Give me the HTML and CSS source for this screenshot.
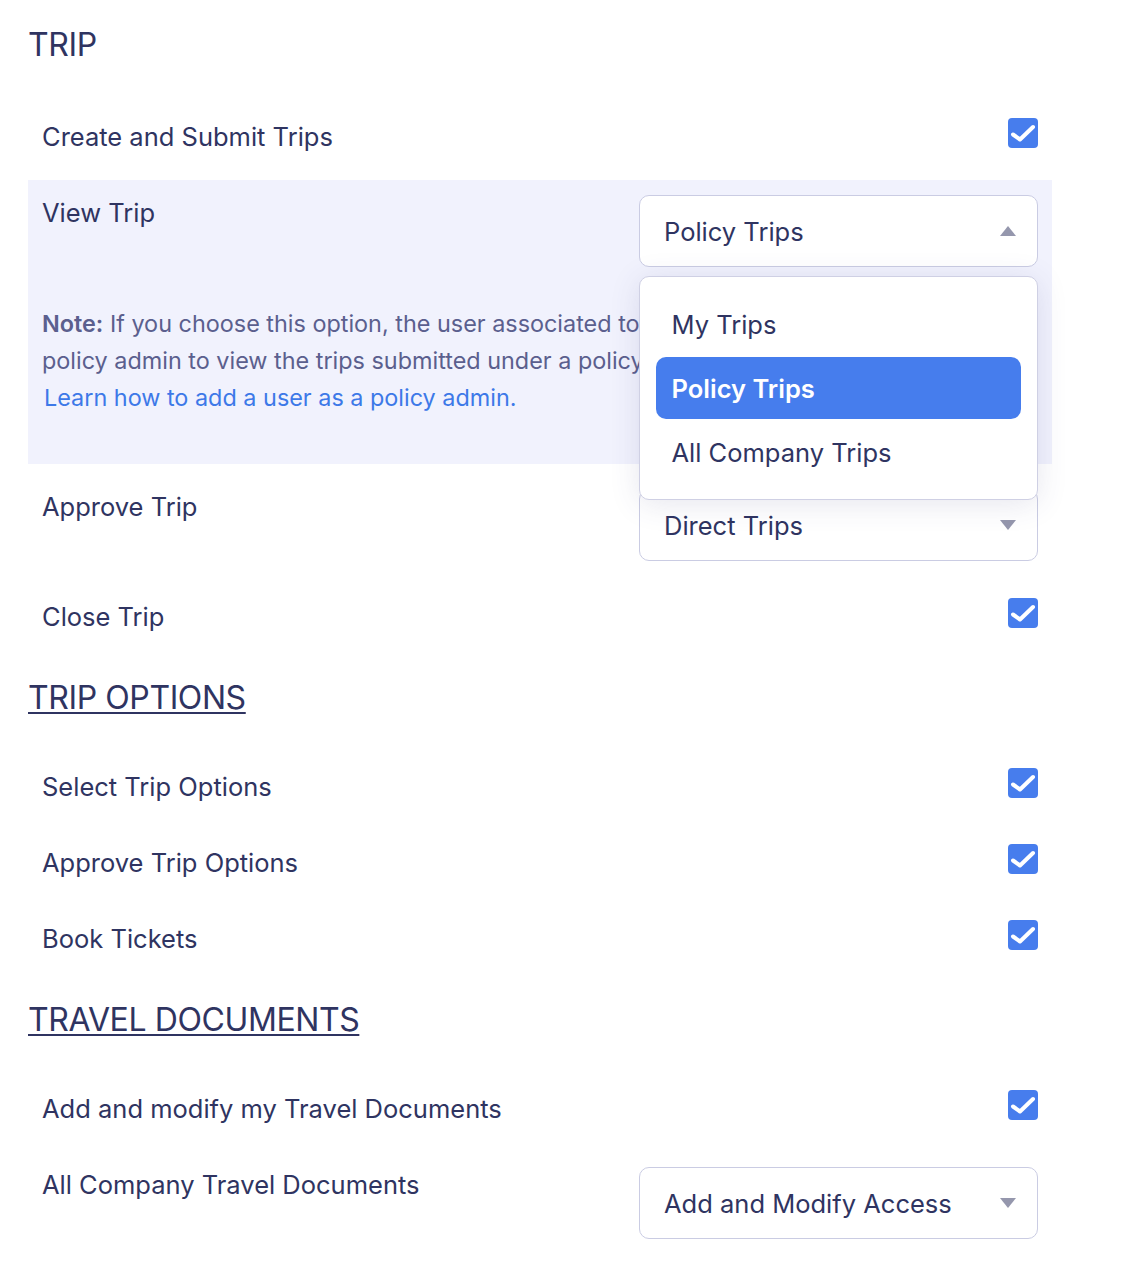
FILE: index.html
```html
<!DOCTYPE html>
<html lang="en">
<head>
  <meta charset="UTF-8" />
  <meta name="viewport" content="width=device-width, initial-scale=1.0" />
  <title>Role Permissions - Trip</title>
  <link rel="stylesheet" href="styles.css">
</head>
<body>

  <main class="perms">

    <h2 class="section-title first">TRIP</h2>

    <div class="perm-row">
      <div class="perm-main">
        <span class="perm-label">Create and Submit Trips</span>
        <span class="check"><svg viewBox="0 0 30 30" width="30" height="30"><path d="M5 16.5 L12 21.5 L25 9" /></svg></span>
      </div>
    </div>

    <div class="perm-row perm-row-active">
      <div class="perm-main">
        <span class="perm-label">View Trip</span>
        <div class="select">
          <span class="select-value">Policy Trips</span>
          <span class="caret caret-up"></span>
          <ul class="select-menu">
            <li>My Trips</li>
            <li class="selected">Policy Trips</li>
            <li>All Company Trips</li>
          </ul>
        </div>
      </div>
      <p class="perm-note">
        <b>Note:</b> If you choose this option, the user associated to this role must be added as a<br>
        policy admin to view the trips submitted under a policy.
        <a href="#">Learn how to add a user as a policy admin.</a>
      </p>
    </div>

    <div class="perm-row perm-row-select">
      <div class="perm-main">
        <span class="perm-label">Approve Trip</span>
        <div class="select">
          <span class="select-value">Direct Trips</span>
          <span class="caret"></span>
        </div>
      </div>
    </div>

    <div class="perm-row">
      <div class="perm-main">
        <span class="perm-label">Close Trip</span>
        <span class="check"><svg viewBox="0 0 30 30" width="30" height="30"><path d="M5 16.5 L12 21.5 L25 9" /></svg></span>
      </div>
    </div>

    <h2 class="section-title underlined">TRIP OPTIONS</h2>

    <div class="perm-row">
      <div class="perm-main">
        <span class="perm-label">Select Trip Options</span>
        <span class="check"><svg viewBox="0 0 30 30" width="30" height="30"><path d="M5 16.5 L12 21.5 L25 9" /></svg></span>
      </div>
    </div>

    <div class="perm-row">
      <div class="perm-main">
        <span class="perm-label">Approve Trip Options</span>
        <span class="check"><svg viewBox="0 0 30 30" width="30" height="30"><path d="M5 16.5 L12 21.5 L25 9" /></svg></span>
      </div>
    </div>

    <div class="perm-row">
      <div class="perm-main">
        <span class="perm-label">Book Tickets</span>
        <span class="check"><svg viewBox="0 0 30 30" width="30" height="30"><path d="M5 16.5 L12 21.5 L25 9" /></svg></span>
      </div>
    </div>

    <h2 class="section-title underlined">TRAVEL DOCUMENTS</h2>

    <div class="perm-row">
      <div class="perm-main">
        <span class="perm-label">Add and modify my Travel Documents</span>
        <span class="check"><svg viewBox="0 0 30 30" width="30" height="30"><path d="M5 16.5 L12 21.5 L25 9" /></svg></span>
      </div>
    </div>

    <div class="perm-row">
      <div class="perm-main">
        <span class="perm-label">All Company Travel Documents</span>
        <div class="select">
          <span class="select-value">Add and Modify Access</span>
          <span class="caret"></span>
        </div>
      </div>
    </div>

  </main>

</body>
</html>
```

FILE: styles.css
```css
html, body {
  margin: 0;
  padding: 0;
  background-color: #ffffff;
  font-family: Inter, "Noto Sans", sans-serif;
  color: #2f3461;
}

.perms {
  width: 1024px;
  padding: 25px 0 30px 28px;
}

.section-title {
  margin: 28px 0 36px 0;
  font-size: 32px;
  line-height: 40px;
  font-weight: 400;
  letter-spacing: -0.4px;
  color: #2f3461;
}

.section-title.first {
  margin-top: 0;
  margin-bottom: 39px;
}

.section-title.underlined {
  text-decoration: underline;
  text-decoration-thickness: 2px;
  text-underline-offset: 3px;
}

.perm-row {
  padding: 15px 14px;
  margin-bottom: 10px;
}

.perm-row-active {
  background-color: #f1f2fd;
}

.perm-row-select {
  padding-bottom: 13px;
}

.perm-main {
  display: flex;
  justify-content: space-between;
  align-items: flex-start;
}

.perm-label {
  font-size: 25.5px;
  line-height: 36px;
}

.check {
  display: block;
  width: 30px;
  height: 30px;
  margin-top: -1px;
  border-radius: 4px;
  background-color: #477ded;
}

.check svg {
  display: block;
}

.check path {
  fill: none;
  stroke: white;
  stroke-width: 4;
  stroke-linecap: round;
  stroke-linejoin: round;
}

.select {
  position: relative;
  box-sizing: border-box;
  width: 399px;
  height: 72px;
  padding: 0 21px 0 24px;
  border: 1.5px solid #cacce3;
  border-radius: 10px;
  background-color: white;
  display: flex;
  align-items: center;
  justify-content: space-between;
}

.select-value {
  font-size: 25.5px;
}

.caret {
  width: 0;
  height: 0;
  border-left: 8px solid transparent;
  border-right: 8px solid transparent;
  border-top: 10px solid #9597ad;
}

.caret-up {
  border-top: none;
  border-bottom: 10px solid #9597ad;
}

.select-menu {
  position: absolute;
  z-index: 5;
  top: 80px;
  left: -1.5px;
  right: -0.5px;
  margin: 0;
  padding: 16px;
  list-style: none;
  background-color: white;
  border: 1.5px solid #cfd0e4;
  border-radius: 10px;
  box-shadow: 0 4px 30px rgba(60, 64, 120, 0.13);
  display: flex;
  flex-direction: column;
  gap: 2px;
}

.select-menu li {
  height: 62px;
  padding: 0 16px;
  border-radius: 10px;
  display: flex;
  align-items: center;
  font-size: 25.5px;
  color: #2f3461;
}

.select-menu li.selected {
  background-color: #467ded;
  color: white;
  font-weight: 600;
}

.perm-note {
  margin: 38px 0 33px 0;
  font-size: 23.4px;
  line-height: 37px;
  color: #5b5f8e;
}

.perm-note b {
  font-weight: 600;
}

.perm-note a {
  display: block;
  margin-left: 2px;
  color: #3d79e8;
  text-decoration: none;
}
```
